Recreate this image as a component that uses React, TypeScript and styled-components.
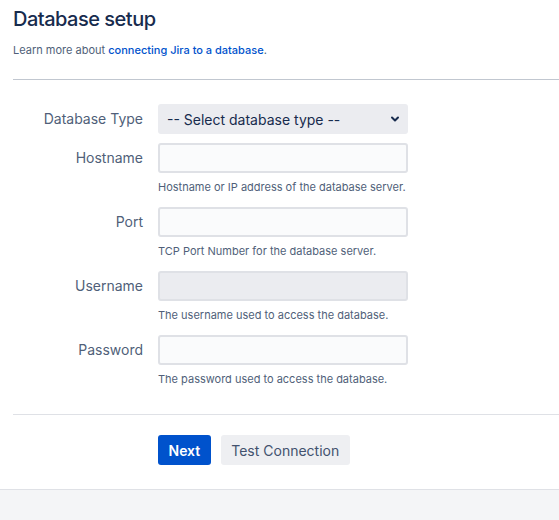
import React from "react";
import styled, { createGlobalStyle } from "styled-components";

const Global = createGlobalStyle`
  html, body { margin: 0; padding: 0; background: #fff; }
  body { font-family: Inter, "Noto Sans", "Liberation Sans", sans-serif; color: #172B4D; }
  * { box-sizing: border-box; }
`;

const Page = styled.div`
  display: flex;
  flex-direction: column;
  min-height: 520px;
`;

const Main = styled.div`
  padding: 0 0 0 13px;
`;

const Header = styled.header`
  padding-bottom: 21px;
`;

const Title = styled.h1`
  margin: 0;
  padding-top: 5px;
  font-size: 20px;
  line-height: 28px;
  font-weight: 500;
  color: #172B4D;
  letter-spacing: -0.5px;
`;

const Intro = styled.p`
  margin: 9px 0 0;
  font-size: 11px;
  line-height: 16px;
  color: #505F79;
`;

const Link = styled.a`
  color: #0052CC;
  text-decoration: none;
  font-weight: 500;
`;

const Divider = styled.hr<{ $tone?: "dark" | "light" }>`
  margin: 0;
  border: 0;
  height: 1px;
  background: ${(p) => (p.$tone === "light" ? "#DFE1E6" : "#C1C7D0")};
`;

const Form = styled.div`
  display: grid;
  grid-template-columns: 130px 250px;
  column-gap: 15px;
  padding: 24px 0 15px;
`;

const Label = styled.label<{ $top?: boolean }>`
  grid-column: 1;
  justify-self: end;
  align-self: ${(p) => (p.$top ? "start" : "center")};
  margin-top: ${(p) => (p.$top ? "5px" : "0")};
  font-size: 14px;
  color: #505F79;
  line-height: 20px;
`;

const Control = styled.div`
  grid-column: 2;
`;

const SelectBox = styled.div`
  height: 30px;
  background: #EBECF0;
  border-radius: 3px;
  display: flex;
  align-items: center;
  justify-content: space-between;
  padding: 0 8px 0 9px;
  font-size: 14px;
  color: #172B4D;
  margin-bottom: 9px;
`;

const Input = styled.div<{ $disabled?: boolean }>`
  height: 30px;
  border: 2px solid #DFE1E6;
  border-radius: 3px;
  background: ${(p) => (p.$disabled ? "#EBECF0" : "#FAFBFC")};
`;

const Hint = styled.div`
  grid-column: 2;
  font-size: 11px;
  line-height: 16px;
  color: #505F79;
  margin: 6px 0 12px;
`;

const Actions = styled.div`
  display: flex;
  gap: 10px;
  padding: 20px 0 24px 145px;
`;

const Button = styled.button<{ $primary?: boolean }>`
  height: 30px;
  border: 0;
  border-radius: 3px;
  padding: 0 10.5px;
  font-family: inherit;
  font-size: 14px;
  font-weight: ${(p) => (p.$primary ? 600 : 400)};
  background: ${(p) => (p.$primary ? "#0052CC" : "#EEEFF2")};
  color: ${(p) => (p.$primary ? "#fff" : "#42526E")};
`;

const Footer = styled.div`
  flex: 1;
  border-top: 1px solid #DFE1E6;
  background: #F4F5F7;
`;

const Chevron = () => (
  <svg width="10" height="8" viewBox="0 0 10 8">
    <path d="M2 2.5 L5 5.5 L8 2.5" fill="none" stroke="#172B4D" strokeWidth="2" strokeLinecap="round" strokeLinejoin="round" />
  </svg>
);

const fields = [
  { label: "Hostname", hint: "Hostname or IP address of the database server." },
  { label: "Port", hint: "TCP Port Number for the database server." },
  { label: "Username", hint: "The username used to access the database.", disabled: true },
  { label: "Password", hint: "The password used to access the database." },
];

export default function App() {
  return (
    <Page>
      <Global />
      <Main>
        <Header>
          <Title>Database setup</Title>
          <Intro>
            Learn more about <Link href="#">connecting Jira to a database</Link>.
          </Intro>
        </Header>
        <Divider />
        <Form>
          <Label $top>Database Type</Label>
          <Control>
            <SelectBox>
              <span>-- Select database type --</span>
              <Chevron />
            </SelectBox>
          </Control>
          {fields.map((f) => (
            <React.Fragment key={f.label}>
              <Label>{f.label}</Label>
              <Control>
                <Input $disabled={f.disabled} />
              </Control>
              <Hint>{f.hint}</Hint>
            </React.Fragment>
          ))}
        </Form>
        <Divider $tone="light" />
        <Actions>
          <Button $primary>Next</Button>
          <Button>Test Connection</Button>
        </Actions>
      </Main>
      <Footer />
    </Page>
  );
}
